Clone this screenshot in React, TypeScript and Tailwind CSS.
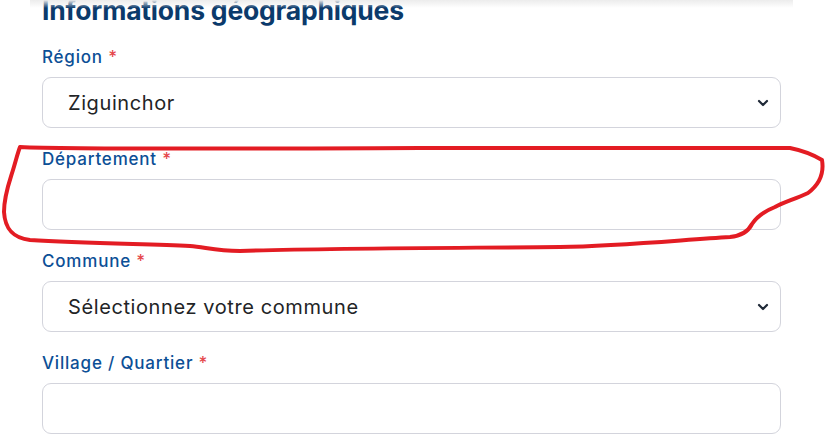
const fields = [
  { label: "Région", kind: "select", value: "Ziguinchor" },
  { label: "Département", kind: "input", value: "" },
  { label: "Commune", kind: "select", value: "Sélectionnez votre commune" },
  { label: "Village / Quartier", kind: "input", value: "" },
];

function Chevron() {
  return (
    <svg width="12" height="8" viewBox="0 0 12 8" className="ml-auto shrink-0">
      <path d="M2 2 L6 6 L10 2" fill="none" stroke="#1f2937" strokeWidth="2.2" strokeLinecap="round" strokeLinejoin="round" />
    </svg>
  );
}

export default function App() {
  return (
    <div className="relative h-[446px] w-[827px] overflow-hidden bg-white font-['Inter',sans-serif]">
      {/* shadow of the sticky bar above */}
      <div className="absolute left-[30px] top-0 h-[8px] w-[763px] bg-gradient-to-b from-[#ececec] to-white/0" />

      <div className="pl-[42px] pr-[46px]">
        <h2 className="-mt-[7px] h-[52px] text-[26.5px] font-bold leading-[34px] tracking-[-0.2px] text-[#0b3a6b]">
          Informations géographiques
        </h2>

        <div className="flex flex-col">
          {fields.map((f) => (
            <div key={f.label} className="flex h-[102px] flex-col">
              <label className="h-[32px] text-[17px] font-medium leading-[24px] tracking-[0.8px] text-[#0c4f96]">
                {f.label} <span className="text-[#e5484d]">*</span>
              </label>
              <div className="flex h-[51px] items-center rounded-[9px] border border-[#d3d4dc] bg-white pl-[25px] pr-[11px]">
                {f.value && (
                  <span className="text-[20px] leading-none tracking-[0.6px] text-[#222426]">{f.value}</span>
                )}
                {f.kind === "select" && <Chevron />}
              </div>
            </div>
          ))}
        </div>
      </div>

      <svg className="pointer-events-none absolute left-0 top-0" width="827" height="446" viewBox="0 0 827 446">
        <path
          d="M20 147 C60 149 200 149 420 148 C600 147 740 147 790 148 C800 150 812 154 822 160 C824 172 820 184 808 193 C795 199 782 203 775 207 C765 211 757 216 752 224 C748 232 740 236 730 237 C680 240 620 246 560 247 C450 248 330 248 240 251 C215 251 205 247 190 246 C140 244 80 243 30 240 C12 238 5 228 4 212 C4 195 10 180 13 170 C16 160 18 152 20 147 Z"
          fill="none"
          stroke="#e31c23"
          strokeWidth="4"
          strokeLinecap="round"
          strokeLinejoin="round"
        />
      </svg>
    </div>
  );
}
